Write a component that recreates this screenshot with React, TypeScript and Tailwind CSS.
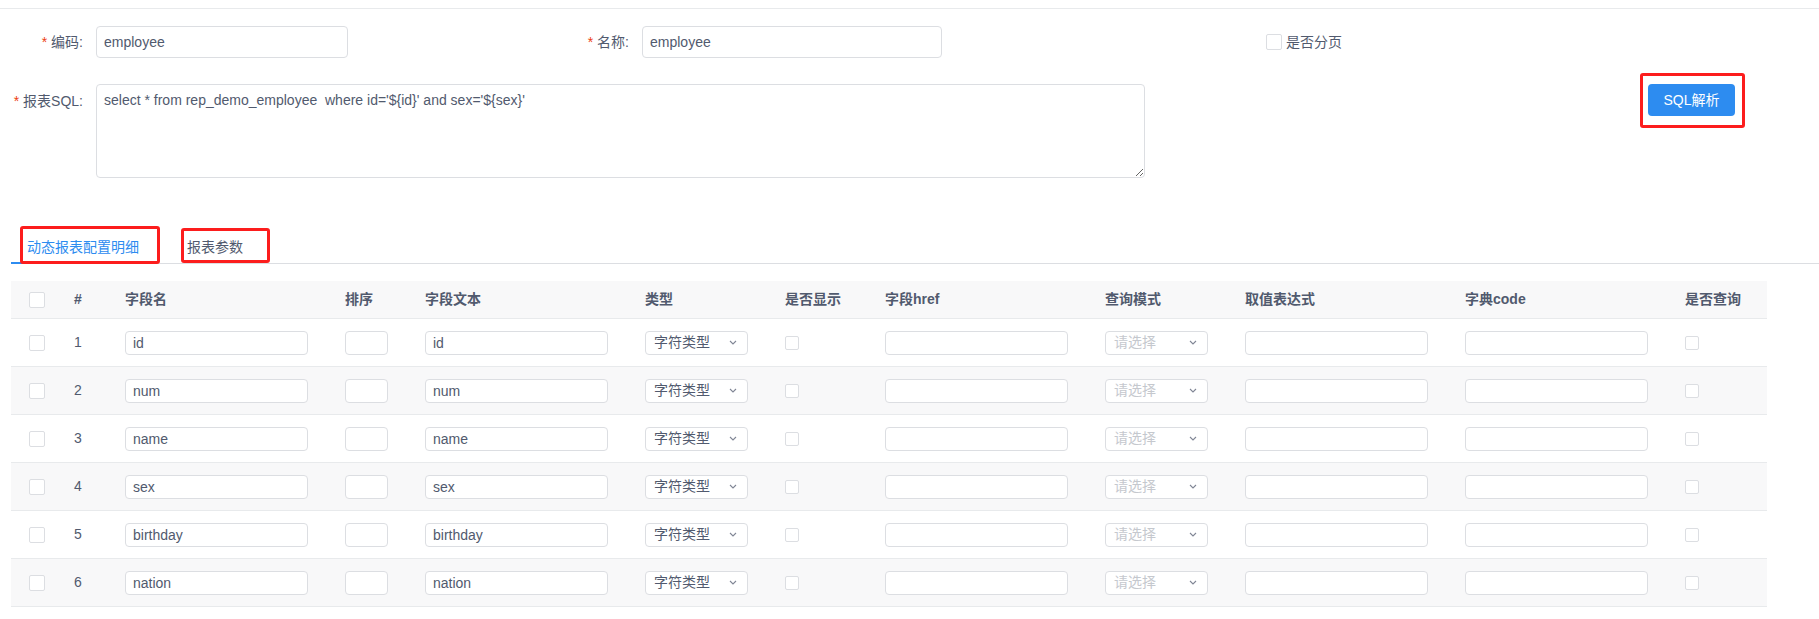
import React from "react";

const rows = ["id", "num", "name", "sex", "birthday", "nation", "education"];

const cols =
  "grid grid-cols-[45px_51px_220px_80px_220px_140px_100px_220px_140px_220px_220px_100px]";

function Box({ size = 16 }: { size?: number }) {
  return (
    <div
      className={
        size === 16
          ? "h-[16px] w-[16px] shrink-0 rounded-[2px] border border-[#dcdee2] bg-white"
          : "h-[14px] w-[14px] shrink-0 rounded-[2px] border border-[#dcdee2] bg-white"
      }
    />
  );
}

function Chevron() {
  return (
    <svg width="8" height="5" viewBox="0 0 8 5" fill="none">
      <path d="M1 1l3 3 3-3" stroke="#808695" strokeWidth="1.1" />
    </svg>
  );
}

function Select({ value, placeholder }: { value?: string; placeholder?: string }) {
  return (
    <div className="flex h-[24px] w-full items-center justify-between rounded-[4px] border border-[#dcdee2] bg-white pl-[8px] pr-[10px]">
      {value ? (
        <span className="text-[#515a6e]">{value}</span>
      ) : (
        <span className="text-[#c5c8ce]">{placeholder}</span>
      )}
      <Chevron />
    </div>
  );
}

function Cell({ children }: { children?: React.ReactNode }) {
  return <div className="flex items-center pl-[18px] pr-[19px]">{children}</div>;
}

function SmallInput({ value = "" }: { value?: string }) {
  return (
    <input
      readOnly
      value={value}
      className="h-[24px] w-full rounded-[4px] border border-[#dcdee2] bg-white px-[7px] text-[14px] text-[#515a6e] outline-none"
    />
  );
}

function Required({ text }: { text: string }) {
  return (
    <span className="whitespace-nowrap">
      <span className="mr-[4px] text-[#ed4014]">*</span>
      {text}
    </span>
  );
}

export default function App() {
  const headers = ["#", "字段名", "排序", "字段文本", "类型", "是否显示", "字段href", "查询模式", "取值表达式", "字典code", "是否查询"];

  return (
    <div className="h-[619px] w-full overflow-hidden bg-white font-['Liberation_Sans','Noto_Sans_CJK_SC',sans-serif] text-[14px] text-[#515a6e]">
      <div className="mt-[8px] border-t border-[#e8eaec]" />

      {/* form */}
      <div className="pt-[17px]">
        <div className="flex h-[32px] items-center">
          <div className="flex w-[546px] items-center">
            <label className="w-[96px] pr-[13px] text-right">
              <Required text="编码:" />
            </label>
            <input
              readOnly
              value="employee"
              className="h-[32px] w-[252px] rounded-[4px] border border-[#dcdee2] px-[7px] text-[14px] text-[#515a6e] outline-none"
            />
          </div>
          <div className="flex w-[720px] items-center">
            <label className="w-[96px] pr-[13px] text-right">
              <Required text="名称:" />
            </label>
            <input
              readOnly
              value="employee"
              className="h-[32px] w-[300px] rounded-[4px] border border-[#dcdee2] px-[7px] text-[14px] text-[#515a6e] outline-none"
            />
          </div>
          <div className="flex items-center">
            <Box />
            <span className="ml-[4px]">是否分页</span>
          </div>
        </div>

        <div className="mt-[26px] flex items-start">
          <label className="w-[96px] pr-[13px] pt-[10px] text-right leading-[14px]">
            <Required text="报表SQL:" />
          </label>
          <textarea
            readOnly
            value={"select * from rep_demo_employee  where id='${id}' and sex='${sex}'"}
            className="h-[94px] w-[1049px] rounded-[4px] border border-[#dcdee2] px-[7px] pt-[5px] text-[14px] leading-[21px] text-[#515a6e] outline-none"
          />
          <div className="relative ml-[503px]">
            <button className="h-[32px] w-[87px] rounded-[4px] bg-[#2d8cf0] text-[14px] text-white">
              SQL解析
            </button>
            <span className="pointer-events-none absolute -left-[8px] -right-[10px] -top-[11px] -bottom-[12px] rounded-[3px] border-[3px] border-[#fc1d1d]" />
          </div>
        </div>
      </div>

      {/* tabs */}
      <div className="relative ml-[11px] mt-[48px] flex h-[38px] border-b border-[#dcdee2]">
        <div className="relative flex h-[37px] items-center px-[16px] pt-[5px] text-[#2d8cf0]">
          动态报表配置明细
          <span className="absolute bottom-[-1px] left-0 right-0 h-[2px] bg-[#2d8cf0]" />
        </div>
        <div className="ml-[16px] flex h-[37px] items-center px-[16px] pt-[5px]">报表参数</div>
        <span className="pointer-events-none absolute left-[9px] top-0 h-[38px] w-[140px] rounded-[3px] border-[3px] border-[#fc1d1d]" />
        <span className="pointer-events-none absolute left-[170px] top-[2px] h-[35px] w-[89px] rounded-[3px] border-[3px] border-[#fc1d1d]" />
      </div>

      {/* table */}
      <div className="ml-[11px] mt-[17px] w-[1756px]">
        <div className={`${cols} h-[38px] border-b border-[#e8eaec] bg-[#f8f8f9] font-bold`}>
          <Cell>
            <Box />
          </Cell>
          {headers.map((h) => (
            <Cell key={h}>{h}</Cell>
          ))}
        </div>
        {rows.map((r, i) => (
          <div
            key={r}
            className={`${cols} h-[48px] border-b border-[#e8eaec] ${i % 2 === 1 ? "bg-[#f8f8f9]" : "bg-white"}`}
          >
            <Cell>
              <Box />
            </Cell>
            <Cell>{i + 1}</Cell>
            <Cell>
              <SmallInput value={r} />
            </Cell>
            <Cell>
              <SmallInput />
            </Cell>
            <Cell>
              <SmallInput value={r} />
            </Cell>
            <Cell>
              <Select value="字符类型" />
            </Cell>
            <Cell>
              <Box size={14} />
            </Cell>
            <Cell>
              <SmallInput />
            </Cell>
            <Cell>
              <Select placeholder="请选择" />
            </Cell>
            <Cell>
              <SmallInput />
            </Cell>
            <Cell>
              <SmallInput />
            </Cell>
            <Cell>
              <Box size={14} />
            </Cell>
          </div>
        ))}
      </div>
    </div>
  );
}
